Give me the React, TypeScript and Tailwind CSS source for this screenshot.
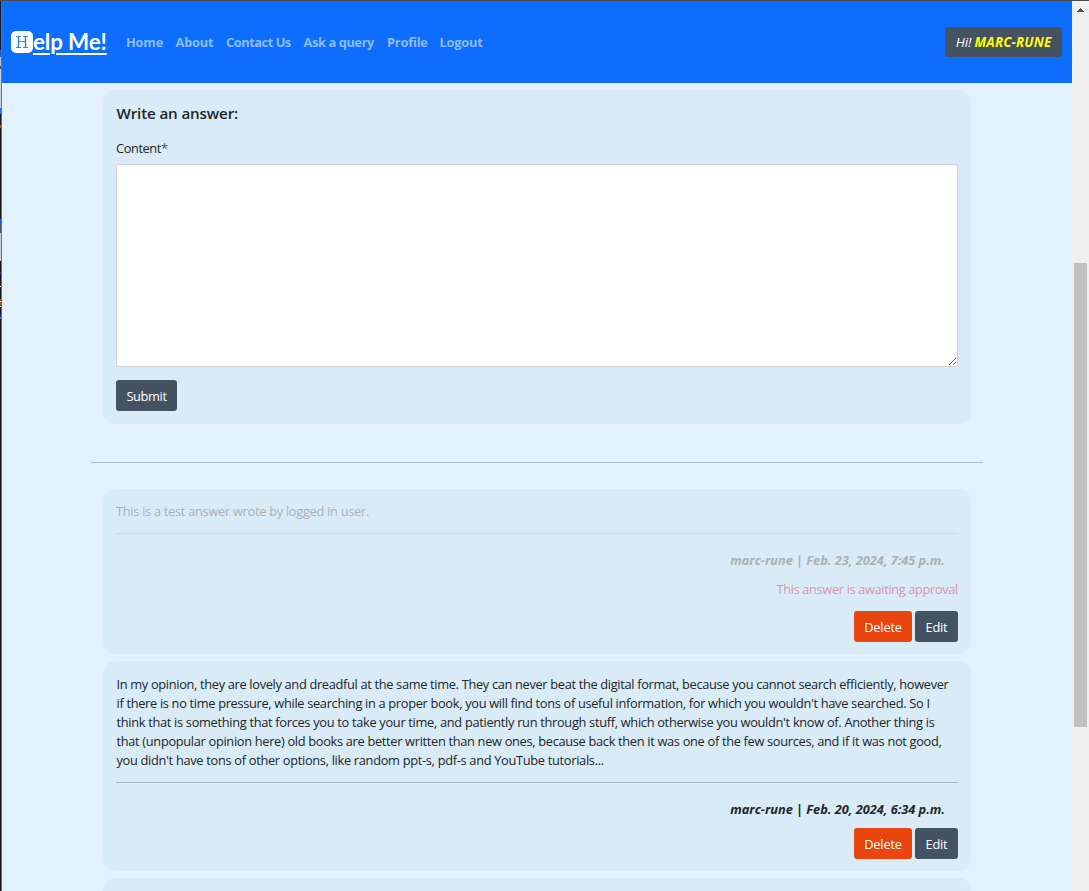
import type { ReactNode } from "react";

const navLinks = [
  { label: "Home", style: "w-[37px] tracking-[-0.2px]" },
  { label: "About", style: "w-[38px] tracking-[-0.2px]" },
  { label: "Contact Us", style: "w-[65px] tracking-[-0.45px]" },
  { label: "Ask a query", style: "w-[71px] tracking-[-0.38px]" },
  { label: "Profile", style: "w-[40px] tracking-[-0.2px]" },
  { label: "Logout", style: "w-[44px] tracking-[-0.2px]" },
];

const edgeSegments = [
  "h-[50px] bg-[#1b1718]",
  "h-[7px] bg-[#2b5fae]",
  "h-[9px] bg-[#b9c4d0]",
  "h-[3px] bg-[#4a4f57]",
  "h-[39px] bg-[#ccd4dc]",
  "h-[6px] bg-[#0d6efd]",
  "h-[11px] bg-[#161213]",
  "h-[3px] bg-[#b0561c]",
  "h-[91px] bg-[#161213]",
  "h-[5px] bg-[#0d5fe0]",
  "h-[9px] bg-[#4a5361]",
  "h-[28px] bg-[#ccd4dc]",
  "h-[11px] bg-[#161213]",
  "h-[2px] bg-[#1c2f8a]",
  "h-[12px] bg-[#161213]",
  "h-[1px] bg-white",
  "h-[12px] bg-[#161213]",
  "h-[2px] bg-[#9a4a14]",
  "h-[1px] bg-white",
  "h-[4px] bg-[#9a4a14]",
  "h-[1px] bg-white",
  "h-[7px] bg-[#161213]",
  "h-[3px] bg-[#1c1c7a]",
  "h-[2px] bg-[#3f8be8]",
  "grow bg-[#161213]",
];

const opinion = [
  { text: "In my opinion, they are lovely and dreadful at the same time. They can never beat the digital format, because you cannot search efficiently, however", style: "tracking-[-0.32px]" },
  { text: "if there is no time pressure, while searching in a proper book, you will find tons of useful information, for which you wouldn't have searched. So I", style: "tracking-[-0.312px]" },
  { text: "think that is something that forces you to take your time, and patiently run through stuff, which otherwise you wouldn't know of. Another thing is", style: "tracking-[-0.302px]" },
  { text: "that (unpopular opinion here) old books are better written than new ones, because back then it was one of the few sources, and if it was not good,", style: "tracking-[-0.31px]" },
  { text: "you didn't have tons of other options, like random ppt-s, pdf-s and YouTube tutorials...", style: "tracking-[-0.3px]" },
];

function Card({ className, children }: { className: string; children?: ReactNode }) {
  return <section className={`mx-3 flex flex-col rounded-xl bg-[#d9ebf6] px-[13px] ${className}`}>{children}</section>;
}

function AnswerActions() {
  return (
    <div className="flex justify-end gap-[3px] text-white">
      <button className="h-[31px] w-[58px] rounded-[3px] bg-[#e8450f] pt-px tracking-[-0.15px]">Delete</button>
      <button className="h-[31px] w-[43px] rounded-[3px] bg-[#445261] pt-px tracking-[-0.2px]">Edit</button>
    </div>
  );
}

function Navbar() {
  return (
    <nav className="flex h-[82px] shrink-0 items-center bg-[#0d6efd] pr-[10px] pl-[9px]">
      <a className="flex h-[30px] w-[96px] items-center font-['Lato',sans-serif] text-[22.4px] whitespace-nowrap text-white">
        <span className="-mt-px flex size-[22px] shrink-0 items-center justify-center rounded-[5px] bg-white">
          <svg viewBox="0 0 14 14" className="size-[14px]" fill="none" stroke="#2f7bdc">
            <path d="M3.5 1v12M10.5 1v12" strokeWidth="1.4" />
            <path d="M1 1.5h5M8 1.5h5M1 12.5h5M8 12.5h5M3.5 6.5h7" strokeWidth="0.9" />
          </svg>
        </span>
        <span className="-mt-[2px] font-bold tracking-[-0.15px] underline decoration-2 underline-offset-[3px]">elp Me!</span>
      </a>
      <ul className="ml-[19px] flex gap-[12.5px] text-[12.8px] font-bold text-[#8fbcfe]">
        {navLinks.map((link) => (
          <li key={link.label} className={`whitespace-nowrap ${link.style}`}>{link.label}</li>
        ))}
      </ul>
      <div className="ml-auto flex h-[30px] w-[117px] items-center justify-center gap-[3px] rounded-[3px] bg-[#445261] text-[13.3px] whitespace-nowrap text-white italic">
        <span>Hi!</span>
        <strong className="tracking-[0.2px] text-[#ffff00]">MARC-RUNE</strong>
      </div>
    </nav>
  );
}

function Scrollbar() {
  return (
    <div className="flex w-[17px] shrink-0 flex-col items-center bg-[#f0f0f0]">
      <svg viewBox="0 0 7 4" className="mt-[7px] h-[4px] w-[7px]" shapeRendering="crispEdges" fill="#505050">
        <path d="M3 0h1v1h1v1h1v1h1v1H0V3h1V2h1V1h1z" />
      </svg>
      <div className="mt-[251px] mr-[2px] ml-[2px] h-[464px] w-[13px] bg-[#c1c1c1]" />
    </div>
  );
}

export default function App() {
  return (
    <div className="flex h-[891px] w-[1089px] flex-col overflow-hidden border-t border-[#484848] bg-[#e3f1fd] font-['Open_Sans','Noto_Sans',sans-serif] text-[12.8px] leading-[19px] text-[#212529]">
      <div className="flex min-h-0 grow">
        <div className="-mt-px flex w-px shrink-0 flex-col">
          {edgeSegments.map((segment, i) => (
            <div key={i} className={`w-px ${segment}`} />
          ))}
        </div>
        <div className="w-px shrink-0 bg-[#68737d]" />
        <div className="flex min-w-0 grow flex-col">
          <Navbar />
          <main className="mt-[7px] ml-[89px] flex w-[892px] flex-col">
            <Card className="h-[334px] shrink-0">
              <h1 className="mt-[13px] pl-[0.5px] text-[15.2px] leading-5 font-semibold tracking-[-0.15px]">Write an answer:</h1>
              <label className="mt-[16px] tracking-[-0.4px]">Content<span className="text-[#4b5358]">*</span></label>
              <textarea className="mt-[6px] h-[203px] w-[842px] shrink-0 resize rounded-[3px] border border-[#ced4da] bg-white" />
              <button className="mt-[13px] h-[31px] w-[61px] rounded-[3px] bg-[#445261] pt-px tracking-[-0.35px] text-white">Submit</button>
            </Card>
            <div className="mt-[38px] h-px shrink-0 bg-[#aebbc7]" />
            <Card className="mt-[26px] h-[165px] shrink-0">
              <p className="mt-[13px] tracking-[-0.28px] text-[#adb0b1]">This is a test answer wrote by logged in user.</p>
              <div className="mt-[12px] h-px shrink-0 bg-[#cbdde8]" />
              <p className="mt-[17px] mr-[13px] text-right font-bold tracking-[-0.03px] text-[#adb0b1] italic">marc-rune | Feb. 23, 2024, 7:45 p.m.</p>
              <p className="mt-[10px] mb-[12px] text-right tracking-[-0.35px] text-[#e093ab]">This answer is awaiting approval</p>
              <AnswerActions />
            </Card>
            <Card className="mt-[7px] h-[210px] shrink-0">
              <div className="mt-[14px]">
                {opinion.map((line) => (
                  <p key={line.text} className={`pl-[0.5px] whitespace-nowrap ${line.style}`}>{line.text}</p>
                ))}
              </div>
              <div className="mt-[12px] h-px shrink-0 bg-[#a9b8c4]" />
              <p className="mt-[17px] mr-[13px] mb-[9px] text-right font-bold tracking-[-0.03px] italic">marc-rune | Feb. 20, 2024, 6:34 p.m.</p>
              <AnswerActions />
            </Card>
            <Card className="mt-[7px] h-[80px] shrink-0" />
          </main>
        </div>
        <Scrollbar />
      </div>
    </div>
  );
}
